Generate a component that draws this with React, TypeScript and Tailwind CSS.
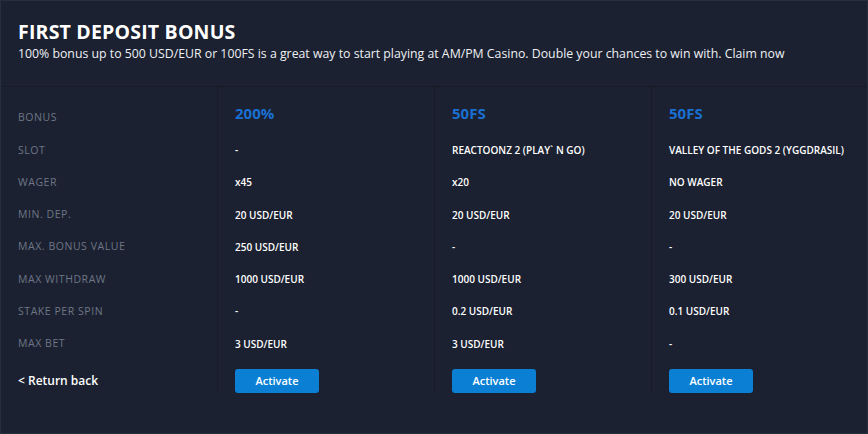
const labels = [
  "Bonus",
  "Slot",
  "Wager",
  "Min. dep.",
  "Max. bonus value",
  "Max withdraw",
  "Stake per spin",
  "Max bet",
];

const offers = [
  {
    title: "200%",
    values: ["-", "x45", "20 USD/EUR", "250 USD/EUR", "1000 USD/EUR", "-", "3 USD/EUR"],
  },
  {
    title: "50FS",
    values: ["REACTOONZ 2 (PLAY` N GO)", "x20", "20 USD/EUR", "-", "1000 USD/EUR", "0.2 USD/EUR", "3 USD/EUR"],
  },
  {
    title: "50FS",
    values: ["VALLEY OF THE GODS 2 (YGGDRASIL)", "NO WAGER", "20 USD/EUR", "-", "300 USD/EUR", "0.1 USD/EUR", "-"],
  },
];

export default function App() {
  return (
    <div
      className="w-[868px] h-[434px] bg-[#1b2130] border border-[#272e3d] flex flex-col text-white overflow-hidden"
      style={{ fontFamily: '"Open Sans", "Liberation Sans", sans-serif' }}
    >
      <div className="h-[86px] shrink-0 border-b border-[#161b26] px-[17px] pt-[17px]">
        <h1 className="text-[19.5px] leading-[28px] font-bold tracking-[0.2px]">FIRST DEPOSIT BONUS</h1>
        <p className="text-[12.3px] leading-[18px] -mt-[1px] text-[#eef0f4]">
          100% bonus up to 500 USD/EUR or 100FS is a great way to start playing at AM/PM Casino. Double your chances to win with. Claim now
        </p>
      </div>

      <div className="flex h-[306px]">
        <div className="w-[217px] shrink-0 border-r border-[#161b26] pl-[17px] pt-[15px]">
          {labels.map((l) => (
            <div key={l} className="h-[32.3px] flex items-center text-[10.5px] uppercase text-[#6e7687] tracking-[0.55px]">
              {l}
            </div>
          ))}
          <div className="mt-[9px] h-[24px] flex items-center text-[12px] font-semibold">&lt; Return back</div>
        </div>

        {offers.map((o, i) => (
          <div
            key={i}
            className={`w-[217px] shrink-0 pl-[17px] pt-[15px] ${i < 2 ? "border-r border-[#161b26]" : ""}`}
          >
            <div className="h-[32.3px] flex items-center text-[15px] font-bold text-[#1a6fd2] -mt-[5px] mb-[5px]">
              {o.title}
            </div>
            {o.values.map((v, j) => (
              <div key={j} className="h-[32.3px] flex items-center text-[10px] font-semibold">
                {v}
              </div>
            ))}
            <button className="mt-[9px] w-[84px] h-[24px] rounded-[3px] bg-[#0a7fd4] text-[11px] font-semibold text-white">
              Activate
            </button>
          </div>
        ))}
      </div>
    </div>
  );
}
